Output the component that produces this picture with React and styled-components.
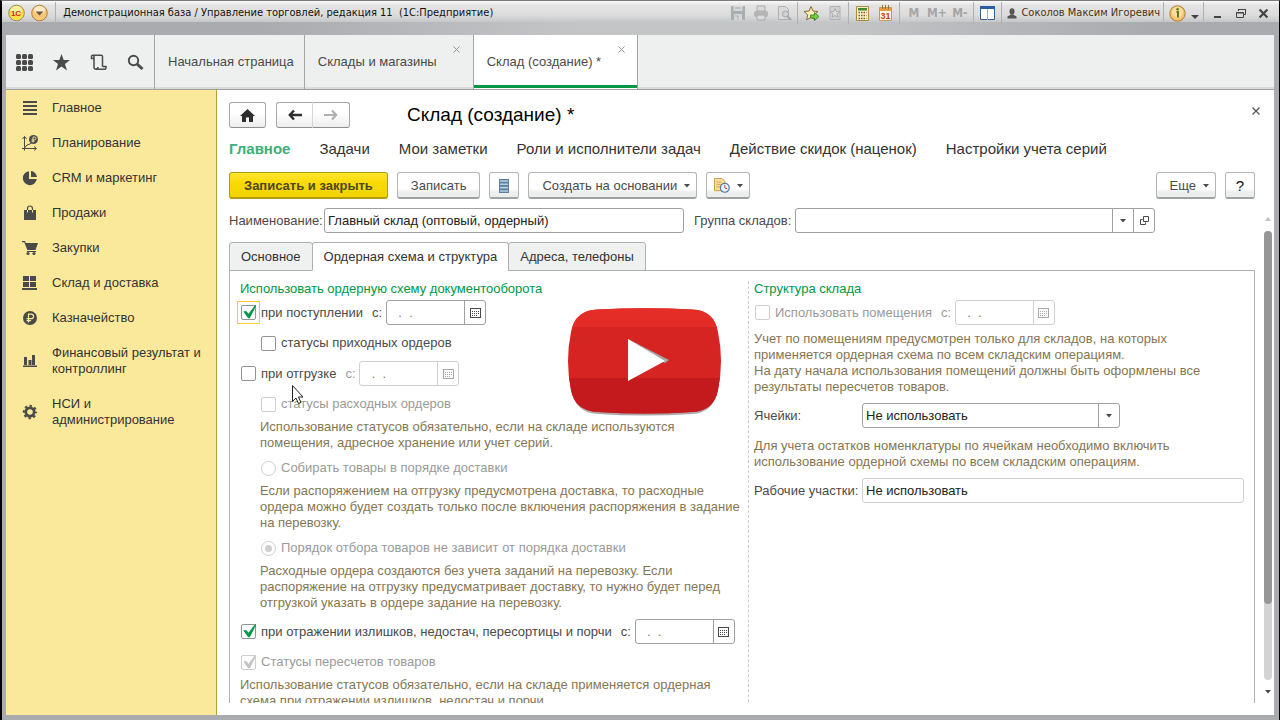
import React from "react"
import styled, { createGlobalStyle, css } from "styled-components"

const GlobalStyle = createGlobalStyle`
    *, *::before, *::after {
        box-sizing: border-box;
    }
    body {
        margin: 0;
        background: #000;
    }
    body, button, input, select {
        font-family: "Liberation Sans", Arial, sans-serif;
        font-size: 13px;
        line-height: 16px;
        color: #4a4a4a;
    }
    button {
        cursor: pointer;
    }
    svg {
        display: block;
    }
`

/* WINDOW */
const Window = styled.div`
    height: 100vh;
    display: flex;
    flex-direction: column;
    overflow: hidden;
    background: #a9abae;
    border-left: 2px solid #000;
    border-right: 1px solid #000;
    border-top: 1px solid #7d797a;
`
const TitleBar = styled.header`
    flex: none;
    height: 34px;
    display: flex;
    align-items: flex-start;
    padding: 0 2px 0 4px;
    background: linear-gradient(#fbfbfb 0, #e4e4e4 4px, #dcdcdc 14px, #c6c7c9 21px, transparent 21px),
        linear-gradient(90deg, #a9abae 20%, #c4c5c7 45%, #c4c5c7 65%, #a9abae 90%);
`
const WindowTitle = styled.h1`
    flex: 1;
    margin: 0;
    font-family: "DejaVu Sans Condensed", "DejaVu Sans", sans-serif;
    font-size: 11px;
    font-weight: normal;
    line-height: 24px;
    color: #111;
    white-space: pre;
`
const ToolGroup = styled.div`
    display: flex;
    align-items: center;
    height: 22px;
    margin-top: 1px;
    padding: 0 2px;
    border-left: 1px solid ${props => props.$first ? "transparent" : "#b0b0b0"};
`
const Tool = styled.button`
    display: grid;
    place-items: center;
    width: ${props => props.$narrow ? "12px" : "23px"};
    height: 22px;
    padding: 0;
    border: none;
    background: none;
    font-family: "DejaVu Sans Condensed", "DejaVu Sans", sans-serif;
    font-size: 12px;
    font-weight: bold;
    color: #a5a5a5;
`
const User = styled.button`
    display: flex;
    align-items: center;
    gap: 4px;
    height: 22px;
    padding: 0 1px 0 3px;
    border: none;
    background: none;
    font-family: "DejaVu Sans Condensed", "DejaVu Sans", sans-serif;
    font-size: 11px;
    color: #4a3310;
    white-space: nowrap;
`
const Logo = styled.div`
    display: flex;
    gap: 6px;
    margin: 3px 7px 0 2px;
`

/* TABS OF THE PROGRAM */
const Client = styled.div`
    flex: 1;
    min-height: 0;
    display: flex;
    flex-direction: column;
    margin: 0 5px 5px 4px;
    background: #fff;
`
const TopBar = styled.nav`
    flex: none;
    display: flex;
    height: 55px;
    background: #eef0ef;
    border-bottom: 1px solid #a0a0a0;
    box-shadow: inset 0 -2px #d8d9d9;
`
const QuickTools = styled.div`
    display: flex;
    align-items: center;
    gap: 13px;
    padding: 0 7px 0 6px;
    border-right: 1px solid #a5a5a5;
`
const QuickButton = styled.button`
    display: grid;
    place-items: center;
    width: 24px;
    height: 24px;
    padding: 0;
    border: none;
    background: none;
`
const PageTab = styled.div`
    display: flex;
    align-items: center;
    gap: 14px;
    padding: 0 10px 0 13px;
    border-right: 1px solid #a5a5a5;
    ${props => props.$active && css`
        background: #fff;
        box-shadow: inset 0 -1px #fff, inset 0 -4px #009846;
    `}
`
const PageLink = styled.a`
    color: #4a4a4a;
    text-decoration: none;
    white-space: nowrap;
`
const TabClose = styled.button`
    display: grid;
    place-items: center;
    align-self: flex-start;
    width: 12px;
    height: 12px;
    margin-top: 8px;
    padding: 0;
    border: none;
    background: none;
`

/* SIDE MENU */
const Body = styled.div`
    flex: 1;
    min-height: 0;
    display: flex;
`
const SideMenu = styled.nav`
    flex: none;
    width: 211px;
    background: #fbe99b;
    border-right: 1px solid #b5a03a;
`
const SideLink = styled.a`
    display: flex;
    align-items: center;
    gap: 14px;
    padding: 10px 12px 9px 16px;
    color: #333;
    text-decoration: none;

    svg {
        flex: none;
    }
`

/* PAGE */
const Page = styled.main`
    flex: 1;
    min-width: 0;
    display: flex;
    flex-direction: column;
    padding: 12px 2px 12px 12px;
`
const PageHeader = styled.div`
    display: flex;
    align-items: center;
    padding-right: 8px;
`
const IconButton = styled.button`
    display: grid;
    place-items: center;
    width: 37px;
    height: 26px;
    padding: 0;
    border: 1px solid #a9a9a9;
    border-bottom-color: #8f8f8f;
    border-radius: 3px;
    background: linear-gradient(#fff 40%, #ecedec);
`
const HistoryButtons = styled.div`
    display: flex;
    margin: 0 57px 0 10px;

    button:first-child {
        border-right-color: #d5d5d5;
        border-radius: 3px 0 0 3px;
    }
    button:last-child {
        border-left: none;
        border-radius: 0 3px 3px 0;
    }
`
const PageTitle = styled.h2`
    flex: 1;
    margin: 0;
    font-size: 19px;
    font-weight: normal;
    line-height: 26px;
    color: #000;
`
const PageClose = styled.button`
    display: grid;
    place-items: center;
    width: 16px;
    height: 16px;
    padding: 0;
    margin-bottom: 8px;
    border: none;
    background: none;
`
const Sections = styled.nav`
    display: flex;
    gap: 29px;
    margin: 11px 0 14px;
`
const SectionLink = styled.a`
    font-size: 15px;
    line-height: 19px;
    color: ${props => props.$active ? "#3bb073" : "#333"};
    font-weight: ${props => props.$active ? "bold" : "normal"};
    text-decoration: none;
    white-space: nowrap;
`
const Commands = styled.div`
    display: flex;
    gap: 9px;
    margin-right: 17px;
`
const Spacer = styled.div`
    flex: 1;
`
const Command = styled.button`
    display: flex;
    align-items: center;
    justify-content: center;
    gap: 7px;
    height: 27px;
    padding: 1px ${props => props.$tight ? "7px" : "13px"} 0;
    border: 1px solid #b5b5b5;
    border-bottom: 2px solid #a0a0a0;
    border-radius: 3px;
    background: linear-gradient(#fff 65%, #eceeed 80%);
    white-space: nowrap;
    ${props => props.$caret && css`
        padding-right: 6px;
    `}
    ${props => props.$primary && css`
        padding: 1px 14px 0;
        border-color: #b39b12;
        background: linear-gradient(#ffe62e, #f9d903 45%, #f3d400);
        font-weight: bold;
        color: #4d4722;
    `}
`
const HelpCommand = styled(Command)`
    width: 30px;
    font-size: 15px;
    color: #111;
`
const ScrollBox = styled.div`
    flex: 1;
    min-height: 0;
    display: flex;
    gap: 9px;
    margin-top: 9px;
`
const Form = styled.form`
    flex: 1;
    min-width: 0;
    overflow: hidden;
`
const ScrollBar = styled.div`
    flex: none;
    width: 8px;
    display: flex;
    flex-direction: column;
    align-items: center;
    justify-content: space-between;
    padding: 9px 0;
`
const Track = styled.div`
    flex: 1;
    width: 8px;
    margin: 10px 0;
    border-radius: 4px;
    background: #d3d3d3;
`
const Thumb = styled.div`
    border-radius: 4px;
    background: #969696;
`

/* FIELDS */
const fieldBox = css`
    height: 25px;
    border: 1px solid ${props => props.$muted ? "#d0d0d0" : "#a0a0a0"};
    border-radius: 3px;
    background: #fff;
`
const NameRow = styled.div`
    display: flex;
    align-items: center;
`
const FieldLabel = styled.label`
    flex: none;
    width: ${props => props.$width || "auto"};
    color: ${props => props.$muted ? "#9a9a9a" : "#4a4a4a"};
    white-space: nowrap;
`
const GroupLabel = styled(FieldLabel)`
    width: 101px;
    margin-left: 10px;
`
const TextInput = styled.input`
    ${fieldBox}
    flex: 0 1 ${props => props.$width || "360px"};
    min-width: 0;
    padding: 0 3px;
    color: #222;
    outline: none;
`
const Combo = styled.div`
    ${fieldBox}
    flex: 0 1 ${props => props.$width || "360px"};
    min-width: 0;
    display: flex;

    input {
        flex: 1;
        min-width: 0;
        padding: 0 4px;
        border: none;
        background: none;
        outline: none;
        color: #8c7a55;
    }
    button {
        flex: none;
        display: grid;
        place-items: center;
        width: 21px;
        padding: 0;
        border: none;
        border-left: 1px solid ${props => props.$muted ? "#d0d0d0" : "#a0a0a0"};
        background: none;
    }
`
const SelectBox = styled.div`
    ${fieldBox}
    flex: 0 1 258px;
    display: grid;
    grid-template-columns: 1fr 21px;
    align-items: center;

    select {
        grid-area: 1 / 1 / 2 / 3;
        height: 23px;
        padding: 0 3px;
        border: none;
        background: none;
        outline: none;
        appearance: none;
        color: #222;
    }
    span {
        grid-area: 1 / 2;
        display: grid;
        place-items: center;
        height: 23px;
        border-left: 1px solid #a0a0a0;
        pointer-events: none;
    }
`
const FormTabs = styled.div`
    display: flex;
    margin-top: 9px;
`
const FormTab = styled.button`
    height: 29px;
    margin-bottom: -1px;
    margin-left: ${props => props.$first ? "0" : "-1px"};
    padding: 0 11px;
    border: 1px solid #b0b0b0;
    border-bottom-color: ${props => props.$active ? "#fff" : "#b0b0b0"};
    border-radius: 3px 3px 0 0;
    background: ${props => props.$active ? "#fff" : "#eff1f0"};
    color: #333;
    white-space: nowrap;
`
const Panel = styled.div`
    display: grid;
    grid-template-columns: minmax(0, 509px) minmax(0, 1fr);
    padding: 10px 10px 40px;
    border: 1px solid #b0b0b0;
`
const Column = styled.div`
    padding-left: ${props => props.$right ? "5px" : "0"};
    border-right: ${props => props.$right ? "none" : "1px dashed #ccc"};
`
const GroupTitle = styled.h3`
    margin: 0;
    font-size: 13px;
    font-weight: normal;
    line-height: 16px;
    color: #009846;
`
const Row = styled.div`
    display: flex;
    align-items: center;
    height: ${props => props.$field ? "25px" : "16px"};
    margin-top: ${props => props.$gap || "8px"};
    margin-left: ${props => props.$indent ? "20px" : "0"};
`
const Hint = styled.p`
    margin: ${props => props.$gap || "7px"} 0 8px ${props => props.$indent ? "20px" : "0"};
    color: #857653;
    white-space: pre-line;
`
const Mark = styled.span`
    flex: none;
    display: grid;
    place-items: center;
    width: 23px;
    height: 23px;
    margin: 0 -2px 0 -3px;
    border: 1px solid ${props => props.$focus ? "#fbc92a" : "transparent"};

    input, svg {
        grid-area: 1 / 1;
    }
    input {
        appearance: none;
        width: 15px;
        height: 15px;
        margin: 0;
        border: 1px solid ${props => props.$muted ? "#cfcfcf" : "#949494"};
        border-radius: ${props => props.$round ? "50%" : "2px"};
        background: #fff;
    }
    svg {
        pointer-events: none;
    }
`
const MarkLabel = styled.label`
    margin-left: 3px;
    margin-right: 9px;
    color: ${props => props.$muted ? "#9a9a9a" : "#4a4a4a"};
    white-space: nowrap;
`

/* OVER THE WINDOW */
const PlayButton = styled.button`
    position: absolute;
    left: 566px;
    top: 306px;
    padding: 0;
    border: none;
    background: none;
`
const Pointer = styled.svg`
    position: absolute;
    left: 291px;
    top: 384px;
`

const Caret = ({ color = "#4a4a4a" }) => (
    <svg width="6" height="4" viewBox="0 0 6 4"><path d="M0 0h6L3 3.5z" fill={color} /></svg>
)
const Cross = ({ size = 7, color = "#8a8a8a", width = 1 }) => (
    <svg width={size} height={size} viewBox="0 0 8 8"><path d="M.5.5l7 7M7.5.5l-7 7" stroke={color} strokeWidth={width} /></svg>
)
const CalendarIcon = ({ color }) => (
    <svg width="11" height="10" viewBox="0 0 11 10">
        <rect x=".5" y=".5" width="10" height="9" fill="#fff" stroke={color} />
        <path d="M2 3.5h7M2 5.5h7M2 7.5h5" stroke={color} strokeDasharray="1 1" />
    </svg>
)
const Tick = ({ color }) => (
    <svg width="17" height="17" viewBox="0 0 17 17">
        <path d="M3.2 7.2h3.3l2 2.6L15.4.8l.8.8-6.4 12.6H8.2z" fill={color} />
    </svg>
)

const Check = ({ id, label, checked, muted, focus, radio }) => (
    <>
        <Mark $muted={muted} $focus={focus} $round={radio}>
            <input id={id} type={radio ? "radio" : "checkbox"} name={radio ? "order" : id}
                defaultChecked={checked} disabled={muted} />
            {checked && !radio && <Tick color={muted ? "#c3c3c3" : "#009846"} />}
            {checked && radio && <svg width="15" height="15"><circle cx="7.5" cy="7.5" r="3.5" fill="#cfcfcf" /></svg>}
        </Mark>
        <MarkLabel htmlFor={id} $muted={muted}>{label}</MarkLabel>
    </>
)

const DateField = ({ id, muted }) => (
    <>
        <FieldLabel htmlFor={id} $muted={muted} $width="14px">с:</FieldLabel>
        <Combo $width="100px" $muted={muted}>
            <input id={id} defaultValue="  .  ." disabled={muted} />
            <button type="button" aria-label="Календарь" disabled={muted}>
                <CalendarIcon color={muted ? "#a8a8a8" : "#4a4a4a"} />
            </button>
        </Combo>
    </>
)

const dark = "#4a4a4a"

const menu = [
    ["Главное", <path d="M1 2h14M1 6h14M1 10h14M1 14h14" stroke={dark} strokeWidth="2" />],
    ["Планирование", <>
        <path d="M2.5 15.5V1.5M0 13.5h14M.5 4l2-2.5 2 2.5M12 11.5l2.5 2-2.5 2M2.5 13l2.5-3 3-1 2-1.5" fill="none" stroke={dark} />
        <circle cx="11.5" cy="4.500" r="4.500" fill={dark} />
        <path d="M11 7.5V2h1.5a1.4 1.4 0 010 2.8H9.5M9.5 6.2h3" fill="none" stroke="#fbe99b" strokeWidth=".9" />
    </>],
    ["CRM и маркетинг", <>
        <path d="M7 1.2a7 7 0 107.8 7.8H7z" fill={dark} />
        <path d="M9 1v6h6a6.5 6.5 0 00-6-6z" fill={dark} />
    </>],
    ["Продажи", <>
        <path d="M2 5h12v10H2z" fill={dark} />
        <path d="M5.5 5V3.5a2.5 2.5 0 015 0V5" fill="none" stroke={dark} strokeWidth="1.2" />
        <path d="M5.5 5v2.5M10.5 5v2.5" stroke="#fbe99b" />
    </>],
    ["Закупки", <>
        <path d="M0 1h3l.8 2H16l-2.5 7H5.3L2.3 2.3H0z" fill={dark} />
        <path d="M5 11.5h9" stroke={dark} />
        <circle cx="6" cy="13.5" r="1.6" fill={dark} /><circle cx="12" cy="13.5" r="1.6" fill={dark} />
    </>],
    ["Склад и доставка", <path d="M1 1h6v5H1zM8 1h6v5H8zM1 7h6v5H1zM8 7h6v5H8zM0 13h15v2H0z" fill={dark} />],
    ["Казначейство", <>
        <circle cx="8" cy="8" r="7" fill={dark} />
        <path d="M6.5 12.5V4.2h2.8a2.2 2.2 0 010 4.4H4.5M4.5 10.7H9" fill="none" stroke="#fbe99b" strokeWidth="1.2" />
    </>],
    ["Финансовый результат и контроллинг", <path d="M2 4h3v8H2zM6.5 7h3v5h-3zM10 2h3v10h-3zM1 12.5h14V14H1z" fill={dark} />],
    ["НСИ и администрирование", <>
        <circle cx="8" cy="8" r="4.2" fill="none" stroke={dark} strokeWidth="2.8" />
        <circle cx="8" cy="8" r="6.2" fill="none" stroke={dark} strokeWidth="2" strokeDasharray="2.43 2.44" strokeDashoffset="1.2" />
    </>],
]

const sections = ["Главное", "Задачи", "Мои заметки", "Роли и исполнители задач", "Действие скидок (наценок)", "Настройки учета серий"]

function TitleTools() {
    return (
        <>
            <ToolGroup $first>
                <Tool aria-label="Сохранить">
                    <svg width="16" height="16" viewBox="0 0 16 16"><path d="M1 1h14v14H1z" fill="#a9aeb0" /><path d="M3.5 1h9v5h-9zM4 9h8v6H4z" fill="#d5d8d9" /><path d="M5 3h6M5 11h3v4" stroke="#a9aeb0" fill="none" /></svg>
                </Tool>
                <Tool aria-label="Печать">
                    <svg width="16" height="16" viewBox="0 0 16 16"><path d="M4 1h8v5H4z" fill="#dadada" stroke="#aaa" /><rect x="1" y="6" width="14" height="6" rx="2" fill="#b5b5b5" /><path d="M4 10h8v5H4z" fill="#dadada" stroke="#aaa" /></svg>
                </Tool>
                <Tool aria-label="Предварительный просмотр">
                    <svg width="16" height="16" viewBox="0 0 16 16"><path d="M2.5 1.5h7l3 3v10h-10z" fill="#dadada" stroke="#b0b0b0" /><circle cx="9.5" cy="9" r="3" fill="#ccd2d6" stroke="#a2a8ac" /><path d="M11.5 11.5L15 15" stroke="#a2a8ac" strokeWidth="2" /></svg>
                </Tool>
            </ToolGroup>
            <ToolGroup>
                <Tool aria-label="Добавить в избранное">
                    <svg width="17" height="17" viewBox="0 0 17 17"><path d="M8 1.5l2 4.5 5 .5-3.7 3.3 1 5L8 12.3l-4.300 2.5 1-5L1 6.5 6 6z" fill="#fdeec0" stroke="#8a6a22" /><path d="M7.500 10h4V7.5l4.500 4-4.500 4V13h-4z" fill="#6fd13b" stroke="#2d7d1a" strokeWidth=".8" /></svg>
                </Tool>
                <Tool aria-label="Избранное">
                    <svg width="16" height="16" viewBox="0 0 16 16"><path d="M3 1.5h10v13H3z" fill="#d2d2d2" stroke="#b0b0b0" /><path d="M8 3.5l1.3 3 3.2.3-2.4 2.1.7 3.2L8 10.5l-2.8 1.6.7-3.2-2.4-2.1 3.2-.3z" fill="#ddd" stroke="#a0a0a0" strokeWidth=".8" /></svg>
                </Tool>
            </ToolGroup>
            <ToolGroup>
                <Tool aria-label="Калькулятор">
                    <svg width="13" height="15" viewBox="0 0 13 15"><path d="M.5.5h12v14H.5z" fill="#fdf3cf" stroke="#b08a3c" /><path d="M2 2h9v2.5H2z" fill="#3f8a2e" /><path d="M2.5 6.5h8M2.5 9.5h8M2.5 12.5h8" stroke="#7a5a2a" strokeWidth="1.5" strokeDasharray="1.5 1" /></svg>
                </Tool>
                <Tool aria-label="Календарь">
                    <svg width="13" height="16" viewBox="0 0 13 16"><path d="M.5 2.5h12v13H.5z" fill="#fff8e8" stroke="#c09a5a" /><path d="M1 3h11v3H1z" fill="#ec9a3c" /><path d="M3.5 0v4M6.5 0v4M9.5 0v4" stroke="#9a7340" /><text x="6.5" y="14" textAnchor="middle" fontSize="9" fontWeight="bold" fill="#d03a1c" fontFamily="Liberation Sans">31</text></svg>
                </Tool>
            </ToolGroup>
            <ToolGroup>
                <Tool>M</Tool>
                <Tool>M+</Tool>
                <Tool>M-</Tool>
            </ToolGroup>
            <ToolGroup>
                <Tool aria-label="Панели">
                    <svg width="15" height="14" viewBox="0 0 15 14"><path d="M.5.5h14v13H.5z" fill="#fff" stroke="#3a5f96" /><path d="M0 0h15v3H0z" fill="#2c5ba6" /><path d="M7.5 3v11" stroke="#9ab0cc" /></svg>
                </Tool>
            </ToolGroup>
            <ToolGroup>
                <User>
                    <svg width="10" height="11" viewBox="0 0 10 11"><ellipse cx="5" cy="3.5" rx="2.5" ry="3.2" fill="#555" /><path d="M.5 10.5v-2L4 6.5h2l3.5 2v2z" fill="#555" /></svg>
                    Соколов Максим Игоревич
                </User>
            </ToolGroup>
            <ToolGroup>
                <Tool aria-label="Справка">
                    <svg width="17" height="17" viewBox="0 0 17 17"><circle cx="8.5" cy="8.5" r="7.7" fill="#f6c56d" stroke="#a9792c" /><circle cx="8.5" cy="7" r="5.5" fill="#fde6b4" opacity=".7" /><path d="M7.5 7H9v5.5" fill="none" stroke="#5f7a1f" strokeWidth="2" /><circle cx="8.6" cy="4.3" r="1.3" fill="#5f7a1f" /></svg>
                </Tool>
                <Tool $narrow aria-label="Меню справки">
                    <svg width="8" height="12" viewBox="0 0 8 12"><path d="M0 8h8l-4 4z" fill="#444" /></svg>
                </Tool>
            </ToolGroup>
            <ToolGroup>
                <Tool aria-label="Свернуть"><svg width="11" height="11"><path d="M2 9h7" stroke="#444" strokeWidth="2" /></svg></Tool>
                <Tool aria-label="Развернуть"><svg width="12" height="11"><path d="M3.5 3V1.5h7v5H9M3 1.5h8M1.5 4.5h7v5h-7zM1 5h8" fill="none" stroke="#444" /></svg></Tool>
                <Tool aria-label="Закрыть"><Cross size={9} color="#444" width={2} /></Tool>
            </ToolGroup>
        </>
    )
}

function App() {
    return (
        <>
            <GlobalStyle />
            <Window>
                <TitleBar>
                    <Logo>
                        <svg width="17" height="18" viewBox="0 0 17 18">
                            <circle cx="8.5" cy="9" r="7.8" fill="#fbe04b" stroke="#a08a60" />
                            <ellipse cx="8.5" cy="6" rx="5.5" ry="4" fill="#fff6c0" opacity=".7" />
                            <text x="8" y="12" textAnchor="middle" fontSize="8" fontWeight="bold" fill="#d8201c" fontFamily="Liberation Sans">1С</text>
                        </svg>
                        <svg width="17" height="18" viewBox="0 0 17 18">
                            <circle cx="8.5" cy="9" r="7.8" fill="#f9c877" stroke="#b08040" />
                            <ellipse cx="8.5" cy="6" rx="5.5" ry="4" fill="#fff2d8" opacity=".8" />
                            <path d="M4.5 7.5h8l-4 4z" fill="#6b5a48" />
                        </svg>
                    </Logo>
                    <ToolGroup aria-hidden="true" />
                    <WindowTitle> Демонстрационная база / Управление торговлей, редакция 11  (1С:Предприятие)</WindowTitle>
                    <TitleTools />
                </TitleBar>

                <Client>
                    <TopBar>
                        <QuickTools>
                            <QuickButton aria-label="Функции">
                                <svg width="17" height="17" viewBox="0 0 17 17" fill={dark}>
                                    {[0, 6, 12].map(y => [0, 6, 12].map(x => <rect key={x + "-" + y} x={x} y={y} width="5" height="5" rx="1.5" />))}
                                </svg>
                            </QuickButton>
                            <QuickButton aria-label="Избранное">
                                <svg width="17" height="17" viewBox="0 0 17 17"><path d="M8.5 0l2.2 6H17l-5 4 2 6.5-5.5-4-5.5 4L5 10 0 6h6.3z" fill={dark} /></svg>
                            </QuickButton>
                            <QuickButton aria-label="История">
                                <svg width="17" height="17" viewBox="0 0 17 17"><path d="M4 4.5H1.5v-2a1.3 1.3 0 011.3-1.3h8.4a1.3 1.3 0 011.3 1.3v10.3M4 2v11a2 2 0 002 2.2h8.5a1.5 1.5 0 001.5-1.5v-1.2h-3.5M6 15a2 2 0 002-2" fill="none" stroke={dark} strokeWidth="1.5" /></svg>
                            </QuickButton>
                            <QuickButton aria-label="Поиск">
                                <svg width="17" height="17" viewBox="0 0 17 17"><circle cx="6.5" cy="6.5" r="4.7" fill="none" stroke={dark} strokeWidth="1.9" /><path d="M10 10l5.5 5" stroke={dark} strokeWidth="3" /></svg>
                            </QuickButton>
                        </QuickTools>
                        <PageTab><PageLink href="#home">Начальная страница</PageLink></PageTab>
                        <PageTab>
                            <PageLink href="#stores">Склады и магазины</PageLink>
                            <TabClose aria-label="Закрыть"><Cross /></TabClose>
                        </PageTab>
                        <PageTab $active>
                            <PageLink href="#new">Склад (создание) *</PageLink>
                            <TabClose aria-label="Закрыть"><Cross /></TabClose>
                        </PageTab>
                    </TopBar>

                    <Body>
                        <SideMenu>
                            {menu.map(([name, icon]) => (
                                <SideLink key={name} href="#menu">
                                    <svg width="16" height="16" viewBox="0 0 16 16">{icon}</svg>
                                    {name}
                                </SideLink>
                            ))}
                        </SideMenu>

                        <Page>
                            <PageHeader>
                                <IconButton aria-label="Домой">
                                    <svg width="15" height="13" viewBox="0 0 15 13"><path d="M7.5 0L15 7h-2v6H9V8.5H6V13H2V7H0z" fill="#2e2e2e" /></svg>
                                </IconButton>
                                <HistoryButtons>
                                    <IconButton aria-label="Назад">
                                        <svg width="14" height="12" viewBox="0 0 14 12"><path d="M14 6H2M6 1.5L1.8 6 6 10.5" fill="none" stroke="#2e2e2e" strokeWidth="2.4" /></svg>
                                    </IconButton>
                                    <IconButton aria-label="Вперед">
                                        <svg width="14" height="12" viewBox="0 0 14 12"><path d="M0 6h12M8 1.5L12.2 6 8 10.5" fill="none" stroke="#b0b0b0" strokeWidth="2.2" /></svg>
                                    </IconButton>
                                </HistoryButtons>
                                <PageTitle>Склад (создание) *</PageTitle>
                                <PageClose aria-label="Закрыть"><Cross size={8} color="#555" width={1.3} /></PageClose>
                            </PageHeader>

                            <Sections>
                                {sections.map((name, i) => <SectionLink key={name} href="#section" $active={i === 0}>{name}</SectionLink>)}
                            </Sections>

                            <Commands>
                                <Command $primary>Записать и закрыть</Command>
                                <Command>Записать</Command>
                                <Command $tight aria-label="Список">
                                    <svg width="14" height="14" viewBox="0 0 14 14"><path d="M2 0h10v14H2z" fill="#5b7f9f" /><path d="M3 2h8M3 5.3h8M3 8.6h8M3 12h8" stroke="#b7d0e4" strokeWidth="1.6" /></svg>
                                </Command>
                                <Command $caret>Создать на основании <Caret /></Command>
                                <Command $tight $caret aria-label="Отчеты">
                                    <svg width="16" height="15" viewBox="0 0 17 16"><path d="M.5.5h8l3 3v10H.5z" fill="#fbdc92" stroke="#c89a48" /><path d="M2.5 4.5h5M2.5 7h6M2.5 9.5h4" stroke="#d8a95a" /><circle cx="11.5" cy="10.5" r="4.7" fill="#eaf2fb" stroke="#5577a8" strokeWidth="1.3" /><path d="M11.5 7.5v3l2.5 1" fill="none" stroke="#c0392b" /></svg>
                                    <Caret />
                                </Command>
                                <Spacer />
                                <Command $caret>Еще <Caret /></Command>
                                <HelpCommand $tight>?</HelpCommand>
                            </Commands>

                            <ScrollBox>
                                <Form>
                                    <NameRow>
                                        <FieldLabel htmlFor="name" $width="95px">Наименование:</FieldLabel>
                                        <TextInput id="name" defaultValue="Главный склад (оптовый, ордерный)" />
                                        <GroupLabel htmlFor="group">Группа складов:</GroupLabel>
                                        <Combo>
                                            <input id="group" />
                                            <button type="button" aria-label="Выбрать"><Caret /></button>
                                            <button type="button" aria-label="Открыть">
                                                <svg width="9" height="9" viewBox="0 0 9 9"><path d="M3.5.5h5v5h-5zM2.5 3.5h-2v5h5v-2" fill="none" stroke={dark} /></svg>
                                            </button>
                                        </Combo>
                                    </NameRow>

                                    <FormTabs>
                                        <FormTab type="button" $first>Основное</FormTab>
                                        <FormTab type="button" $active>Ордерная схема и структура</FormTab>
                                        <FormTab type="button">Адреса, телефоны</FormTab>
                                    </FormTabs>

                                    <Panel>
                                        <Column>
                                            <GroupTitle>Использовать ордерную схему документооборота</GroupTitle>
                                            <Row $field $gap="3px">
                                                <Check id="income" label="при поступлении" checked focus />
                                                <DateField id="income-date" />
                                            </Row>
                                            <Row $indent $gap="10px"><Check id="income-status" label="статусы приходных ордеров" /></Row>
                                            <Row $field $gap="10px">
                                                <Check id="outcome" label="при отгрузке" />
                                                <DateField id="outcome-date" muted />
                                            </Row>
                                            <Row $indent $gap="10px"><Check id="outcome-status" label="статусы расходных ордеров" muted /></Row>
                                            <Hint $indent>{"Использование статусов обязательно, если на складе используются\nпомещения, адресное хранение или учет серий."}</Hint>
                                            <Row $indent $gap="9px"><Check id="by-delivery" label="Собирать товары в порядке доставки" radio muted /></Row>
                                            <Hint $indent>{"Если распоряжением на отгрузку предусмотрена доставка, то расходные\nордера можно будет создать только после включения распоряжения в задание\nна перевозку."}</Hint>
                                            <Row $indent $gap="9px"><Check id="any-order" label="Порядок отбора товаров не зависит от порядка доставки" radio checked muted /></Row>
                                            <Hint $indent>{"Расходные ордера создаются без учета заданий на перевозку. Если\nраспоряжение на отгрузку предусматривает доставку, то нужно будет перед\nотгрузкой указать в ордере задание на перевозку."}</Hint>
                                            <Row $field>
                                                <Check id="surplus" label="при отражении излишков, недостач, пересортицы и порчи" checked />
                                                <DateField id="surplus-date" />
                                            </Row>
                                            <Row $gap="10px"><Check id="recount" label="Статусы пересчетов товаров" checked muted /></Row>
                                            <Hint>{"Использование статусов обязательно, если на складе применяется ордерная\nсхема при отражении излишков, недостач и порчи."}</Hint>
                                        </Column>

                                        <Column $right>
                                            <GroupTitle>Структура склада</GroupTitle>
                                            <Row $field $gap="3px">
                                                <Check id="rooms" label="Использовать помещения" muted />
                                                <DateField id="rooms-date" muted />
                                            </Row>
                                            <Hint $gap="6px">{"Учет по помещениям предусмотрен только для складов, на которых\nприменяется ордерная схема по всем складским операциям.\nНа дату начала использования помещений должны быть оформлены все\nрезультаты пересчетов товаров."}</Hint>
                                            <Row $field>
                                                <FieldLabel htmlFor="cells" $width="108px">Ячейки:</FieldLabel>
                                                <SelectBox>
                                                    <select id="cells"><option>Не использовать</option></select>
                                                    <span><Caret /></span>
                                                </SelectBox>
                                            </Row>
                                            <Hint $gap="10px">{"Для учета остатков номенклатуры по ячейкам необходимо включить\nиспользование ордерной схемы по всем складским операциям."}</Hint>
                                            <Row $field>
                                                <FieldLabel htmlFor="areas" $width="108px">Рабочие участки:</FieldLabel>
                                                <TextInput id="areas" $muted $width="382px" defaultValue="Не использовать" />
                                            </Row>
                                        </Column>
                                    </Panel>
                                </Form>

                                <ScrollBar>
                                    <svg width="6" height="4" viewBox="0 0 6 4"><path d="M0 4h6L3 0z" fill="#c0c0c0" /></svg>
                                    <Track><Thumb style={{ height: "83%" }} /></Track>
                                    <Caret />
                                </ScrollBar>
                            </ScrollBox>
                        </Page>
                    </Body>
                </Client>
            </Window>

            <PlayButton aria-label="Смотреть видео">
                <svg width="158" height="112" viewBox="0 0 158 112">
                    <defs>
                        <clipPath id="plate">
                            <path d="M32 3.5Q79 .8 126 3.5Q148 4 152 26Q158 55 152 84Q148 105 126 106Q79 109 32 106Q9 105 5 84Q-1 55 5 26Q9 4 32 3.5z" />
                        </clipPath>
                    </defs>
                    <path d="M32 6Q79 4 126 6Q148 6 151 28Q156 57 151 86Q147 107 126 108Q79 111 32 108Q10 107 6 86Q2 57 6 28Q9 6 32 6z" fill="#555" opacity=".5" />
                    <g clipPath="url(#plate)">
                        <path d="M0 0h158v112H0z" fill="#d62422" />
                        <path d="M0 0h158v21H0z" fill="#e52d27" />
                        <path d="M0 72h158v40H0z" fill="#c4191d" />
                    </g>
                    <path d="M62 33l41 21-4 3z" fill="#a5a5a5" />
                    <path d="M62 33l37 22-37 20z" fill="#fff" />
                </svg>
            </PlayButton>
            <Pointer width="13" height="21" viewBox="0 0 13 21">
                <path d="M1.5 1.5v16L5 14l2.5 5.5 2.5-1L7.5 13H12z" fill="#fff" stroke="#222" />
            </Pointer>
        </>
    )
}

export default App
